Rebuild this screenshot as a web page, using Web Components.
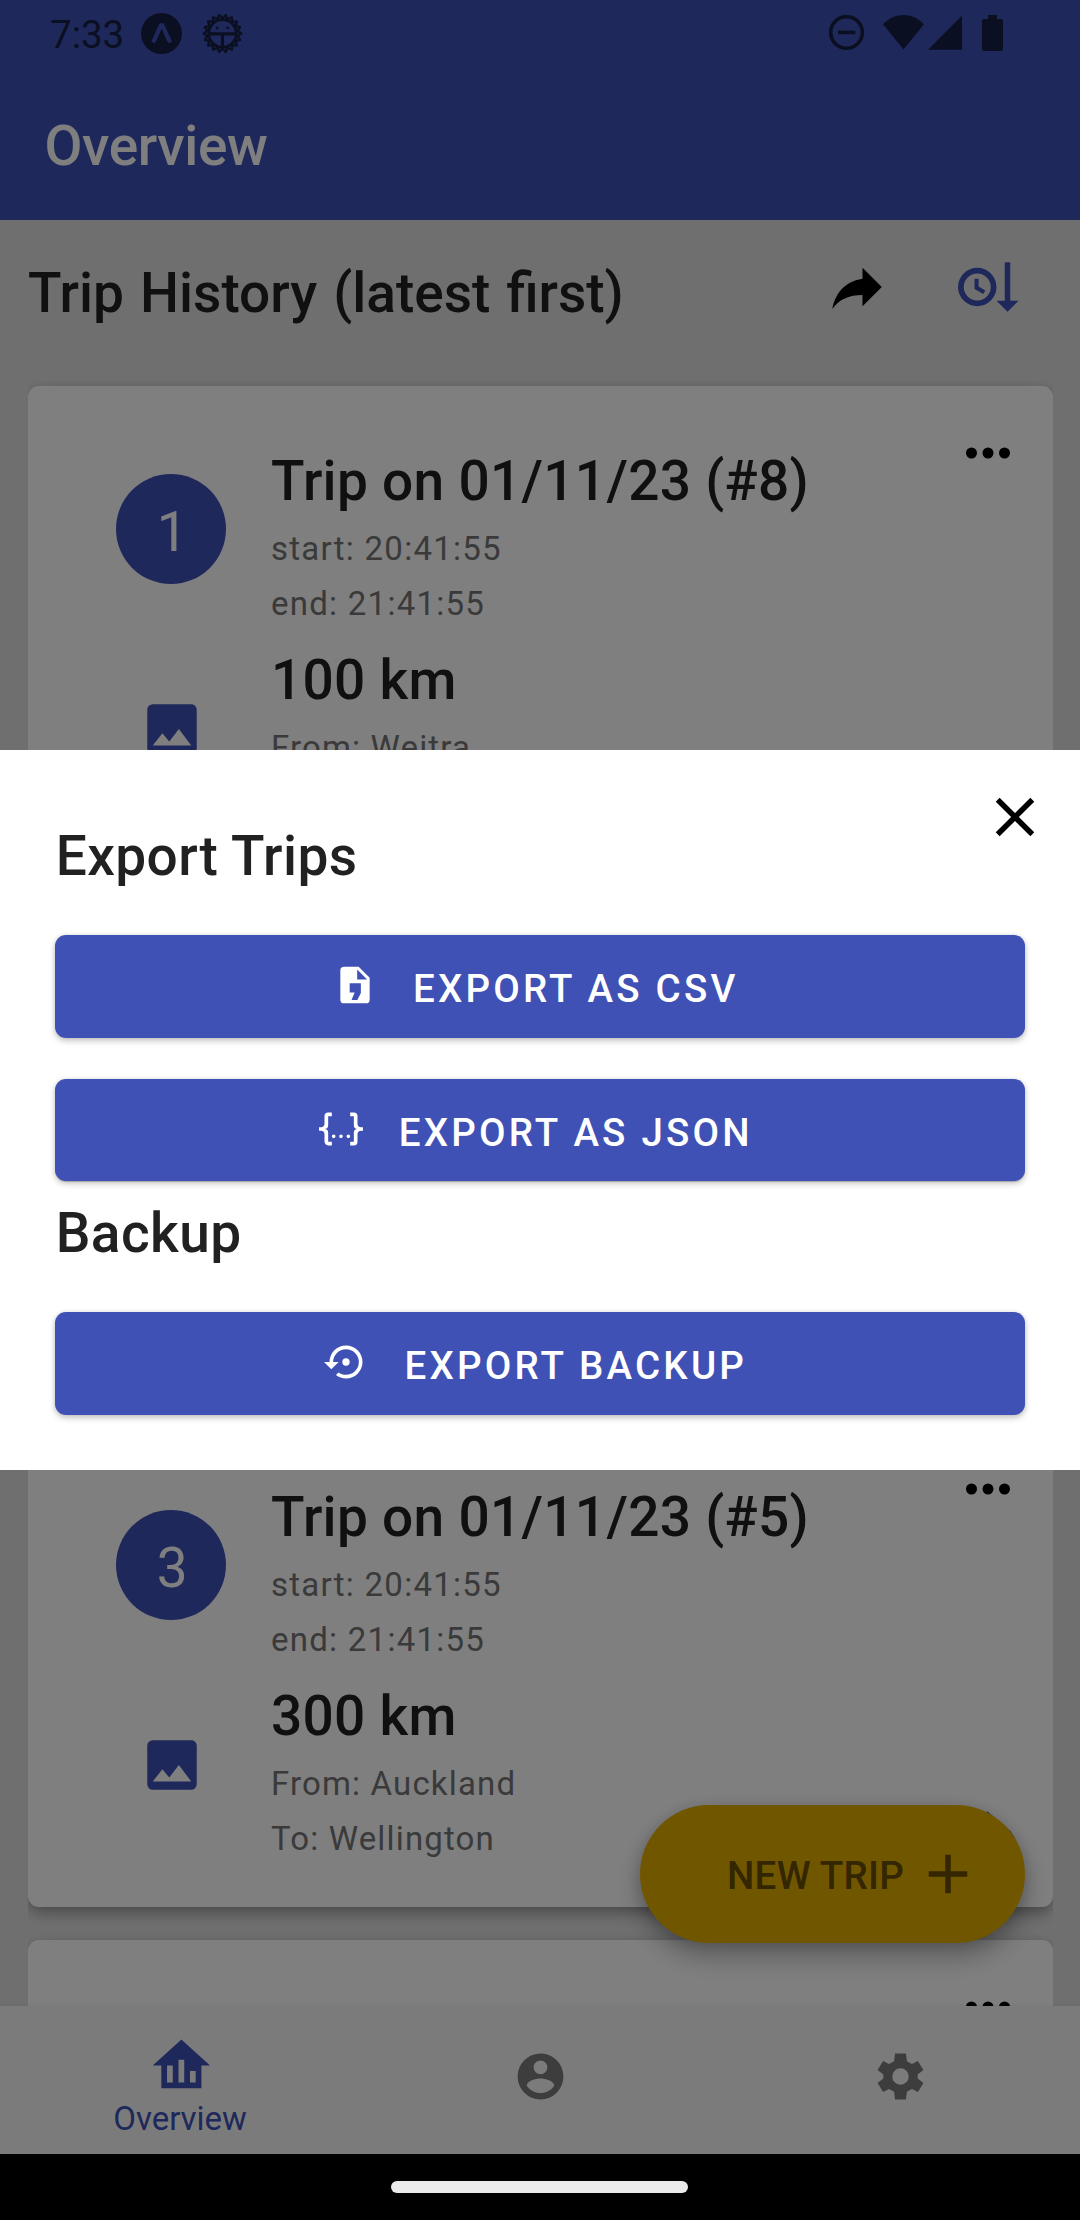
<!DOCTYPE html>
<html lang="en">
<head>
<meta charset="utf-8">
<title>Overview</title>
<style>
  html, body { margin: 0; padding: 0; }
  body { width: 1080px; height: 2220px; overflow: hidden; background: #000; font-family: Roboto, "Noto Sans", sans-serif; }
</style>
</head>
<body>
<trip-app></trip-app>

<script>
const ICONS = {
  share: 'M21,12L14,5V9C7,10 4,15 3,20C5.5,16.5 9,14.9 14,14.9V19L21,12Z',
  sort: 'M19 17H22L18 21L14 17H17V3H19M7 5A7 7 0 1 0 7 19A7 7 0 1 0 7 5M7 7.1A4.9 4.9 0 1 1 7 16.9A4.9 4.9 0 1 1 7 7.1M6 9V12.69L9.19 14.53L9.94 13.23L7.5 11.82V9H6Z',
  dots: 'M16,12A2,2 0 0,1 18,10A2,2 0 0,1 20,12A2,2 0 0,1 18,14A2,2 0 0,1 16,12M10,12A2,2 0 0,1 12,10A2,2 0 0,1 14,12A2,2 0 0,1 12,14A2,2 0 0,1 10,12M4,12A2,2 0 0,1 6,10A2,2 0 0,1 8,12A2,2 0 0,1 6,14A2,2 0 0,1 4,12Z',
  image: 'M8.5,13.5L11,16.5L14.5,12L19,18H5M21,19V5C21,3.89 20.1,3 19,3H5A2,2 0 0,0 3,5V19A2,2 0 0,0 5,21H19A2,2 0 0,0 21,19Z',
  close: 'M19,6.41L17.59,5L12,10.59L6.41,5L5,6.41L10.59,12L5,17.59L6.41,19L12,13.41L17.59,19L19,17.59L13.41,12L19,6.41Z',
  csv: 'M14,2H6A2,2 0 0,0 4,4V20A2,2 0 0,0 6,22H18A2,2 0 0,0 20,20V8L14,2M9.1 11.1H15.2V16.3L13.3 20.2H10.1L11.8 16.1H9.1ZM13.2,9V3.6L18.6,9Z',
  json: 'M5,3H7V5H5V10A2,2 0 0,1 3,12A2,2 0 0,1 5,14V19H7V21H5C3.93,20.73 3,20.1 3,19V15A2,2 0 0,0 1,13H0V11H1A2,2 0 0,0 3,9V5A2,2 0 0,1 5,3M19,3A2,2 0 0,1 21,5V9A2,2 0 0,0 23,11H24V13H23A2,2 0 0,0 21,15V19A2,2 0 0,1 19,21H17V19H19V14A2,2 0 0,1 21,12A2,2 0 0,1 19,10V5H17V3H19M12,15A1,1 0 0,1 13,16A1,1 0 0,1 12,17A1,1 0 0,1 11,16A1,1 0 0,1 12,15M8,15A1,1 0 0,1 9,16A1,1 0 0,1 8,17A1,1 0 0,1 7,16A1,1 0 0,1 8,15M16,15A1,1 0 0,1 17,16A1,1 0 0,1 16,17A1,1 0 0,1 15,16A1,1 0 0,1 16,15Z',
  restore: 'M12,3A9,9 0 0,0 3,12H0L4,16L8,12H5A7,7 0 0,1 12,5A7,7 0 0,1 19,12A7,7 0 0,1 12,19C10.5,19 9.09,18.5 7.94,17.7L6.5,19.14C8.04,20.3 9.94,21 12,21A9,9 0 0,0 21,12A9,9 0 0,0 12,3M14,12A2,2 0 0,0 12,10A2,2 0 0,0 10,12A2,2 0 0,0 12,14A2,2 0 0,0 14,12Z',
  plus: 'M19,13H13V19H11V13H5V11H11V5H13V11H19V13Z',
  home: 'M12,3L2,12H5V20H19V12H22L12,3M9,18H7V12H9V18M13,18H11V10H13V18M17,18H15V14H17V18Z',
  account: 'M12,19.2C9.5,19.2 7.29,17.92 6,16C6.03,14 10,12.9 12,12.9C14,12.9 17.97,14 18,16C16.71,17.92 14.5,19.2 12,19.2M12,5A3,3 0 0,1 15,8A3,3 0 0,1 12,11A3,3 0 0,1 9,8A3,3 0 0,1 12,5M12,2A10,10 0 0,0 2,12A10,10 0 0,0 12,22A10,10 0 0,0 22,12C22,6.47 17.5,2 12,2Z',
  cog: 'M12 8.4A3.6 3.6 0 1 0 12 15.6A3.6 3.6 0 1 0 12 8.4M9.6 2H14.4L14.8 5.3L17 6.5L19.6 5.2L22 9.2L19.5 11.1V12.9L22 14.8L19.6 18.8L17 17.5L14.8 18.7L14.4 22H9.6L9.2 18.7L7 17.5L4.4 18.8L2 14.8L4.5 12.9V11.1L2 9.2L4.4 5.2L7 6.5L9.2 5.3Z',
  directions: 'M14,14.5V12H10V15H8V11A1,1 0 0,1 9,10H14V7.5L17.5,11M11.8,2L20.2,9.2L22,12L12,22L2,12Z'
};

function define(name, html, setup) {
  const template = document.createElement('template');
  template.innerHTML = html;
  customElements.define(name, class extends HTMLElement {
    constructor() {
      super();
      this.attachShadow({ mode: 'open' }).append(template.content.cloneNode(true));
    }
    connectedCallback() { if (setup) setup(this, this.shadowRoot); }
  });
}

define('app-icon', `
  <style>
    :host { display: block; flex: none; }
    svg { display: block; width: 100%; height: 100%; }
  </style>
  <svg viewBox="0 0 24 24"><path fill="currentColor" fill-rule="evenodd"/></svg>`,
  (el, root) => {
    const size = el.getAttribute('size') || 66;
    el.style.width = el.style.height = size + 'px';
    root.querySelector('path').setAttribute('d', ICONS[el.getAttribute('name')]);
  });

define('status-bar', `
  <style>
    :host { display: flex; align-items: flex-start; height: 66px; box-sizing: border-box; padding: 0 77px 0 50px; color: #141e42; }
    .time { width: 90.5px; font-size: 38.5px; line-height: 66px; padding-top: 2px; }
    .left, .right { display: flex; align-items: flex-start; }
    .right { margin-left: auto; padding-top: 15px; }
    svg { display: block; }
  </style>
  <div class="left">
    <div class="time">7:33</div>
    <svg style="margin-top:13px" width="41" height="41" viewBox="0 0 41 41">
      <path fill="currentColor" fill-rule="evenodd" d="M20.5 0A20.5 20.5 0 1 0 20.5 41A20.5 20.5 0 1 0 20.5 0ZM18.6 10.3H22.6L31 28.2L28 30.4L25.8 27.4L20.7 15.8L15.4 27.4L13.4 30.4L10.4 28.2Z"/>
    </svg>
    <svg class="bug" style="margin:12.5px 0 0 20.5px" width="41" height="41" viewBox="-20.5 -20.5 41 41">
      <polygon fill="none" stroke="currentColor" stroke-width="2.4" stroke-linejoin="round"/>
      <circle r="13.8" fill="none" stroke="currentColor" stroke-width="2.8"/>
      <path d="M-13 .3H13M0 0V14" stroke="currentColor" stroke-width="3.2"/>
      <circle cx="-5.2" cy="-5.6" r="1.4" fill="currentColor"/><circle cx="5.2" cy="-5.6" r="1.4" fill="currentColor"/>
    </svg>
  </div>
  <div class="right">
    <svg width="36" height="36" viewBox="0 0 36 36"><circle cx="17.5" cy="17.5" r="15.8" fill="none" stroke="currentColor" stroke-width="3.6"/><path d="M9 17.4H26.4" stroke="currentColor" stroke-width="3.6"/></svg>
    <svg style="margin-left:18.5px" width="41" height="36" viewBox="0 0 41 36"><path fill="currentColor" d="M0 9.3C12-3 29-3 41 9.3L20.5 34.4Z"/></svg>
    <svg style="margin-left:3.5px" width="35" height="36" viewBox="0 0 35 36"><path fill="currentColor" d="M34 .5V34.8H0Z"/></svg>
    <svg style="margin-left:19.5px" width="21" height="36" viewBox="0 0 21 36"><path fill="currentColor" d="M6 0H15V4H19Q21 4 21 6V34Q21 36 19 36H2Q0 36 0 34V6Q0 4 2 4H6Z"/></svg>
  </div>`,
  (el, root) => {
    const pts = [];
    for (let i = 0; i < 36; i++) {
      const r = i % 2 ? 15.2 : 18.8, a = (i + 1) * Math.PI / 18;
      pts.push((r * Math.sin(a)).toFixed(2) + ',' + (-r * Math.cos(a)).toFixed(2));
    }
    root.querySelector('polygon').setAttribute('points', pts.join(' '));
  });

define('app-header', `
  <style>
    :host { display: block; height: 220px; background: #3f51b5; color: #fff; }
    h1 { margin: 39px 0 0 44.5px; font-size: 55px; font-weight: 500; line-height: 82px; letter-spacing: -.35px; }
  </style>
  <status-bar></status-bar>
  <h1><slot></slot></h1>`);

define('list-heading', `
  <style>
    :host { display: flex; align-items: flex-start; height: 154px; box-sizing: border-box; padding: 32px 56px 0 28px; color: #212121; }
    h2 { margin: 0 auto 0 0; font-size: 55px; font-weight: 500; line-height: 82px; word-spacing: 2.4px; }
    app-icon { margin-top: 2.3px; }
    .share { color: #000; margin-right: 68.2px; }
    .sort { color: #3f51b5; }
  </style>
  <h2><slot></slot></h2>
  <app-icon class="share" name="share"></app-icon>
  <app-icon class="sort" name="sort"></app-icon>`);

define('trip-card', `
  <style>
    :host { display: flex; flex: none; height: 485px; box-sizing: border-box; padding: 54px 32px 0 88px; background: #fff; border-radius: 11px;
      box-shadow: 0 7px 16px -1px rgba(0,0,0,.28), 0 3px 12px rgba(0,0,0,.10); }
    .lead { width: 110px; margin-right: 45px; display: flex; flex-direction: column; align-items: center; padding-top: 34px; }
    .num { width: 110px; height: 110px; border-radius: 50%; background: #3f51b5; color: #fff; font-size: 55px; line-height: 116px; text-align: center; text-indent: 2.5px; margin-bottom: 112px; }
    .lead app-icon { color: #3f51b5; position: relative; left: 1px; }
    .body { flex: 1; }
    .t { font-size: 55px; font-weight: 500; line-height: 82px; letter-spacing: .29px; color: #212121; white-space: pre; margin-bottom: -1px; }
    .t.km { margin-top: 8px; }
    .c { font-size: 33px; line-height: 55px; letter-spacing: 1.16px; color: #757575; white-space: pre; }
    .start, .end { letter-spacing: 1.26px; }
    .trail { display: flex; flex-direction: column; justify-content: space-between; margin-top: -20px; padding-bottom: 35px; }
    .trail .dir { color: #3f51b5; }
  </style>
  <div class="lead"><div class="num"></div><app-icon name="image"></app-icon></div>
  <div class="body">
    <div class="t title"></div>
    <div class="c start"></div>
    <div class="c end"></div>
    <div class="t km"></div>
    <div class="c from"></div>
    <div class="c to"></div>
  </div>
  <div class="trail"><app-icon name="dots"></app-icon><app-icon class="dir" name="directions"></app-icon></div>`,
  (el, root) => {
    const put = (cls, text) => { root.querySelector(cls).textContent = text; };
    const a = n => el.getAttribute(n) || '';
    if (!a('num')) return;
    put('.num', a('num'));
    put('.title', a('label'));
    put('.start', 'start: ' + a('start'));
    put('.end', 'end: ' + a('end'));
    put('.km', a('distance'));
    put('.from', 'From: ' + a('from'));
    if (a('to')) put('.to', 'To: ' + a('to'));
  });

define('trip-list', `
  <style>
    :host { display: flex; flex-direction: column; gap: 33px; flex: 1; min-height: 0; overflow: hidden; margin: 0 27px 0 28px; padding-top: 12px; }
  </style>
  <slot></slot>`);

define('fab-button', `
  <style>
    :host { position: absolute; right: 55px; bottom: 211px; width: 385px; height: 138px; box-sizing: border-box; border-radius: 69px;
      display: flex; align-items: center; justify-content: flex-end; padding-right: 44px; background: #e3ac00; color: #664d00;
      font-size: 38.5px; font-weight: 500; box-shadow: 0 14px 26px rgba(0,0,0,.27), 0 2px 14px rgba(0,0,0,.14); }
    span { padding-top: 2px; margin-right: 11px; letter-spacing: .27px; }
  </style>
  <span><slot></slot></span><app-icon name="plus"></app-icon>`);

define('bottom-nav', `
  <style>
    :host { display: flex; height: 148px; background: #f7f7f7; color: #7b7b7b; box-shadow: 0 -1px 3px rgba(0,0,0,.05); position: relative; }
    .tab { flex: 1; display: flex; flex-direction: column; align-items: center; box-sizing: border-box; padding-top: 42.7px; }
    .tab.on { color: #3f51b5; padding-top: 24.7px; }
    .on app-icon { margin-left: 3px; }
    .tab:not(.on) app-icon { margin-left: 1px; }
    .label { font-size: 33px; line-height: 38px; margin-top: .3px; letter-spacing: -.05px; }
  </style>
  <div class="tab on"><app-icon name="home" size="68.75"></app-icon><div class="label">Overview</div></div>
  <div class="tab"><app-icon name="account" size="55"></app-icon></div>
  <div class="tab"><app-icon name="cog" size="55"></app-icon></div>`);

define('export-button', `
  <style>
    :host { display: flex; align-items: flex-start; justify-content: center; gap: 36px; height: 103px; box-sizing: border-box; padding: 28px 8.5px 0 0;
      background: #3f51b5; color: #fff; border-radius: 11px; font-size: 38.5px; font-weight: 500; letter-spacing: 3.2px;
      box-shadow: 0 3px 6px rgba(0,0,0,.22), 0 0 4px rgba(0,0,0,.10); }
    span { line-height: 45px; margin-top: 3px; white-space: pre; }
  </style>
  <app-icon size="44"></app-icon><span><slot></slot></span>`,
  (el, root) => {
    const icon = root.querySelector('app-icon');
    icon.setAttribute('name', el.getAttribute('icon'));
    icon.shadowRoot.querySelector('path').setAttribute('d', ICONS[el.getAttribute('icon')]);
  });

define('export-dialog', `
  <style>
    :host { position: absolute; left: 0; right: 0; top: 750px; height: 720px; box-sizing: border-box; background: #fff; padding: 65px 55px 55px; display: block; color: #212121; }
    h2 { margin: 0 0 38px; padding-left: .7px; font-size: 55px; font-weight: 500; line-height: 82px; letter-spacing: .43px; }
    .first { margin-bottom: 41px; }
    .second { height: 102px; margin-bottom: 11px; box-shadow: 0 1px 0 rgba(0,0,0,.18), 0 3px 6px rgba(0,0,0,.20), 0 0 4px rgba(0,0,0,.10); }
    .close { position: absolute; right: 32px; top: 34px; color: #000; }
  </style>
  <app-icon class="close" name="close"></app-icon>
  <h2>Export Trips</h2>
  <export-button class="first" icon="csv">EXPORT AS CSV</export-button>
  <export-button class="second" icon="json">EXPORT AS JSON</export-button>
  <h2>Backup</h2>
  <export-button icon="restore">EXPORT BACKUP</export-button>`);

define('trip-app', `
  <style>
    :host { display: flex; flex-direction: column; width: 1080px; height: 2220px; background: #000; overflow: hidden; }
    .screen { position: relative; height: 2154px; display: flex; flex-direction: column; background: #dfdfdf; overflow: hidden; }
    .scrim { position: absolute; inset: 0; background: rgba(0,0,0,.5); }
    .system { height: 66px; display: flex; align-items: flex-start; justify-content: center; }
    .pill { width: 297px; height: 12px; margin: 27px 0 0 -1px; border-radius: 6px; background: #ebebeb; }
  </style>
  <div class="screen">
    <app-header>Overview</app-header>
    <list-heading>Trip History (latest first)</list-heading>
    <trip-list>
      <trip-card num="1" label="Trip on 01/11/23 (#8)" start="20:41:55" end="21:41:55" distance="100 km" from="Weitra"></trip-card>
      <trip-card></trip-card>
      <trip-card num="3" label="Trip on 01/11/23 (#5)" start="20:41:55" end="21:41:55" distance="300 km" from="Auckland" to="Wellington"></trip-card>
      <trip-card></trip-card>
    </trip-list>
    <bottom-nav></bottom-nav>
    <fab-button>NEW TRIP</fab-button>
    <div class="scrim"></div>
    <export-dialog></export-dialog>
  </div>
  <div class="system"><div class="pill"></div></div>`);
</script>
</body>
</html>
